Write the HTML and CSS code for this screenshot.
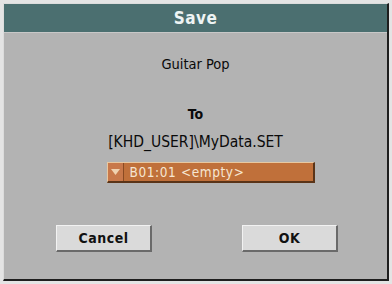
FILE: index.html
```html
<!DOCTYPE html>
<html>
<head>
<meta charset="utf-8">
<link rel="stylesheet" href="styles.css">
</head>
<body>
<div class="dialog">
  <div class="title">Save</div>
  <div class="content">
    <div class="name">Guitar Pop</div>
    <div class="to">To</div>
    <div class="path">[KHD_USER]\MyData.SET</div>
    <div class="select">
      <span class="arrow"><svg width="9" height="6" viewBox="0 0 9 6"><polygon points="0,0 9,0 4.5,6" fill="#f0d2b0"/></svg></span>
      <span class="value">B01:01 &lt;empty&gt;</span>
    </div>
    <div class="buttons">
      <div class="btn">Cancel</div>
      <div class="btn">OK</div>
    </div>
  </div>
</div>
</body>
</html>
```
FILE: styles.css
```css
html, body {
  margin: 0;
  padding: 0;
  background: #e4e4e4;
}
body {
  width: 392px;
  height: 284px;
  padding: 3px 0 0 3px;
  box-sizing: border-box;
  font-family: "DejaVu Sans Condensed", "Liberation Sans Narrow", "DejaVu Sans", sans-serif;
}
.dialog {
  width: 386px;
  height: 278px;
  box-sizing: border-box;
  background: #b3b3b3;
  border-top: 1px solid #dcdcdc;
  border-left: 1px solid #dcdcdc;
  border-right: 2px solid #1e1e1e;
  border-bottom: 2px solid #1e1e1e;
  display: flex;
  flex-direction: column;
}
.title {
  height: 28px;
  background: #4b6f70;
  color: #eef4f4;
  font-weight: bold;
  font-size: 17px;
  line-height: 28px;
  text-align: center;
  border-bottom: 1px solid #c8c8c8;
  letter-spacing: 0.5px;
}
.content {
  display: flex;
  flex-direction: column;
  align-items: center;
  padding-top: 23px;
  color: #0a0a0a;
}
.name {
  font-size: 14.5px;
  line-height: 16px;
}
.to {
  margin-top: 34px;
  font-size: 14px;
  font-weight: bold;
  line-height: 16px;
}
.path {
  margin-top: 12px;
  font-size: 15.5px;
  line-height: 16px;
}
.select {
  margin-top: 12px;
  margin-left: 30px;
  width: 208px;
  height: 21px;
  box-sizing: border-box;
  background: #c0703a;
  border-top: 1px solid #e8c8a0;
  border-left: 1px solid #e8c8a0;
  border-right: 2px solid #5a3418;
  border-bottom: 2px solid #5a3418;
  display: flex;
  align-items: center;
}
.arrow {
  width: 15px;
  height: 100%;
  display: flex;
  align-items: center;
  justify-content: center;
  border-right: 1px solid #8a4a22;
  background: #c8784a;
}
.value {
  padding-left: 6px;
  color: #f6e6d2;
  font-size: 13.5px;
  letter-spacing: 0.6px;
}
.buttons {
  margin-top: 42px;
  width: 100%;
  display: flex;
  justify-content: space-between;
  padding: 0 49px 0 52px;
  box-sizing: border-box;
}
.btn {
  width: 96px;
  height: 27px;
  box-sizing: border-box;
  background: #dadada;
  border-top: 1px solid #f2f2f2;
  border-left: 1px solid #f2f2f2;
  border-right: 2px solid #6a6a6a;
  border-bottom: 2px solid #6a6a6a;
  display: flex;
  align-items: center;
  justify-content: center;
  font-weight: bold;
  font-size: 14px;
  color: #111;
  letter-spacing: 0.5px;
}
```
